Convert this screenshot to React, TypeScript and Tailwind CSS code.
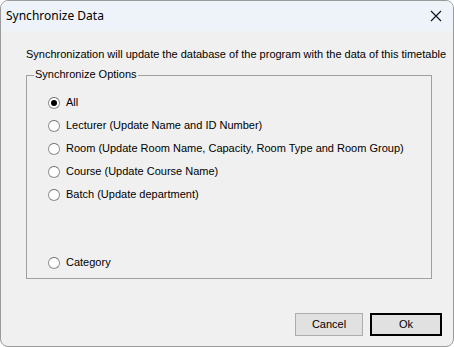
import { useState } from 'react';

const options = [
  { id: 'all', label: 'All' },
  { id: 'lecturer', label: 'Lecturer (Update Name and ID Number)' },
  { id: 'room', label: 'Room (Update Room Name, Capacity, Room Type and Room Group)' },
  { id: 'course', label: 'Course (Update Course Name)' },
  { id: 'batch', label: 'Batch (Update department)' },
];

function Radio({ checked, label, onClick }: { checked: boolean; label: string; onClick: () => void }) {
  return (
    <button onClick={onClick} className="flex items-center h-[13px] gap-[6px] text-left">
      <span className="w-[12px] h-[12px] rounded-full border border-[#8f8f8f] border-t-[#6b6b6b] bg-white flex items-center justify-center shrink-0">
        {checked && <span className="w-[6px] h-[6px] rounded-full bg-black" />}
      </span>
      <span className="text-[11px] leading-none text-black">{label}</span>
    </button>
  );
}

export default function App() {
  const [selected, setSelected] = useState('all');

  return (
    <div
      className="w-[454px] h-[347px] bg-[#f0f0f0] border border-[#9a9a9a] rounded-t-[8px] rounded-b-[8px] overflow-hidden flex flex-col"
      style={{ fontFamily: '"Liberation Sans", Arial, sans-serif' }}
    >
      {/* Title bar */}
      <div className="h-[30px] bg-[#eef3f9] flex items-center justify-between pl-[5px] pr-[10px] shrink-0">
        <span className="text-[12px] text-black" style={{ fontFamily: '"Noto Sans", "Open Sans", sans-serif' }}>
          Synchronize Data
        </span>
        <svg width="12" height="12" viewBox="0 0 12 12" className="mr-[1px]">
          <path d="M1 1L11 11M11 1L1 11" stroke="#111" strokeWidth="1.1" />
        </svg>
      </div>

      {/* Body */}
      <div className="flex-1 flex flex-col pl-[25px] pr-[11px] pt-[18px]">
        <p className="text-[11px] leading-none text-black whitespace-nowrap">
          Synchronization will update the database of the program with the data of this timetable
        </p>

        <div className="relative mt-[15px] w-[406px] h-[204px] border border-[#a0a0a0]">
          <span className="absolute -top-[7px] left-[7px] bg-[#f0f0f0] px-[1px] text-[11px] leading-none">
            Synchronize Options
          </span>
          <div className="flex flex-col gap-[10px] pl-[21px] pt-[20px]">
            {options.map(o => (
              <Radio key={o.id} checked={selected === o.id} label={o.label} onClick={() => setSelected(o.id)} />
            ))}
          </div>
          <div className="pl-[21px] mt-[55px]">
            <Radio checked={selected === 'category'} label="Category" onClick={() => setSelected('category')} />
          </div>
        </div>

        <div className="flex justify-end gap-[7px] mt-[34px]">
          <button className="w-[68px] h-[23px] border border-[#adadad] bg-[#e1e1e1] text-[11px]">Cancel</button>
          <button className="w-[72px] h-[23px] border-2 border-black bg-[#e1e1e1] text-[11px]">Ok</button>
        </div>
      </div>
    </div>
  );
}
